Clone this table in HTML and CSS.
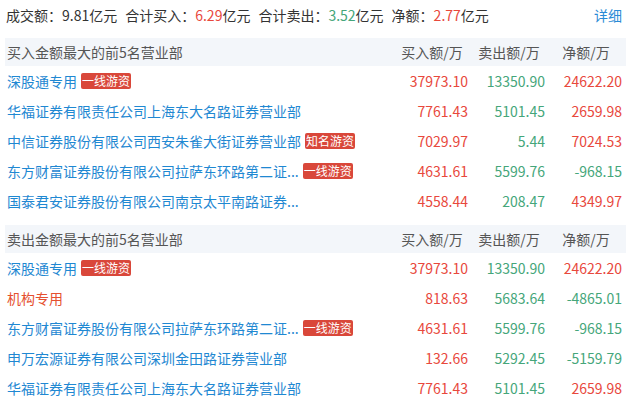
FILE: index.html
```html
<!DOCTYPE html>
<html lang="zh-CN">
<head>
<meta charset="utf-8">
<title>龙虎榜</title>
<link rel="stylesheet" href="styles.css">
</head>
<body>
<div class="page">
  <div class="summary">
    <div class="stats">
      <span class="stat">成交额：<span class="v">9.81</span>亿元</span>
      <span class="stat">合计买入：<span class="v up">6.29</span>亿元</span>
      <span class="stat">合计卖出：<span class="v down">3.52</span>亿元</span>
      <span class="stat">净额：<span class="v up">2.77</span>亿元</span>
    </div>
    <a class="more">详细</a>
  </div>

  <div class="section">
    <div class="head">
      <div class="name">买入金额最大的前5名营业部</div>
      <div class="col">买入额/万</div>
      <div class="col">卖出额/万</div>
      <div class="col">净额/万</div>
    </div>
    <div class="row">
      <div class="name"><span class="link">深股通专用</span><span class="tag">一线游资</span></div>
      <div class="num up">37973.10</div><div class="num down">13350.90</div><div class="num up">24622.20</div>
    </div>
    <div class="row">
      <div class="name"><span class="link">华福证券有限责任公司上海东大名路证券营业部</span></div>
      <div class="num up">7761.43</div><div class="num down">5101.45</div><div class="num up">2659.98</div>
    </div>
    <div class="row">
      <div class="name"><span class="link">中信证券股份有限公司西安朱雀大街证券营业部</span><span class="tag">知名游资</span></div>
      <div class="num up">7029.97</div><div class="num down">5.44</div><div class="num up">7024.53</div>
    </div>
    <div class="row">
      <div class="name"><span class="link">东方财富证券股份有限公司拉萨东环路第二证...</span><span class="tag">一线游资</span></div>
      <div class="num up">4631.61</div><div class="num down">5599.76</div><div class="num down">-968.15</div>
    </div>
    <div class="row">
      <div class="name"><span class="link">国泰君安证券股份有限公司南京太平南路证券...</span></div>
      <div class="num up">4558.44</div><div class="num down">208.47</div><div class="num up">4349.97</div>
    </div>
  </div>

  <div class="section second">
    <div class="head">
      <div class="name">卖出金额最大的前5名营业部</div>
      <div class="col">买入额/万</div>
      <div class="col">卖出额/万</div>
      <div class="col">净额/万</div>
    </div>
    <div class="row">
      <div class="name"><span class="link">深股通专用</span><span class="tag">一线游资</span></div>
      <div class="num up">37973.10</div><div class="num down">13350.90</div><div class="num up">24622.20</div>
    </div>
    <div class="row">
      <div class="name"><span class="inst">机构专用</span></div>
      <div class="num up">818.63</div><div class="num down">5683.64</div><div class="num down">-4865.01</div>
    </div>
    <div class="row">
      <div class="name"><span class="link">东方财富证券股份有限公司拉萨东环路第二证...</span><span class="tag">一线游资</span></div>
      <div class="num up">4631.61</div><div class="num down">5599.76</div><div class="num down">-968.15</div>
    </div>
    <div class="row">
      <div class="name"><span class="link">申万宏源证券有限公司深圳金田路证券营业部</span></div>
      <div class="num up">132.66</div><div class="num down">5292.45</div><div class="num down">-5159.79</div>
    </div>
    <div class="row">
      <div class="name"><span class="link">华福证券有限责任公司上海东大名路证券营业部</span></div>
      <div class="num up">7761.43</div><div class="num down">5101.45</div><div class="num up">2659.98</div>
    </div>
  </div>
</div>
</body>
</html>
```

FILE: styles.css
```css
* { box-sizing: border-box; }
html, body { margin: 0; padding: 0; background: #fff; }
body {
  font-family: "Noto Sans CJK SC", "Microsoft YaHei", sans-serif;
  font-size: 14px;
  color: #333;
  width: 626px;
  overflow: hidden;
}
.page { padding: 0 4px 0 5px; }

.summary {
  height: 30px;
  margin-bottom: 8px;
  display: flex;
  align-items: center;
  justify-content: space-between;
  padding-left: 1px;
}
.stats { display: flex; gap: 8px; }
.stat { white-space: nowrap; }
.v { color: #333; }
.more { color: #2a8bd6; cursor: pointer; }

.up { color: #e8483c; }
.down { color: #45a67a; }

.section.second { margin-top: 9px; }

.head {
  display: flex;
  align-items: center;
  height: 28px;
  background: #f3f6fa;
  color: #555;
  margin-right: -4px;
  padding-right: 4px;
}
.head .name { padding-left: 2px; }
.head .col { width: 77px; text-align: center; padding-left: 5px; white-space: nowrap; }

.row {
  display: flex;
  align-items: center;
  height: 30px;
}
.name {
  flex: 1;
  min-width: 0;
  padding-left: 2px;
  display: flex;
  align-items: center;
  white-space: nowrap;
}
.link { color: #1f88d2; }
.inst { color: #e5502f; }
.tag {
  margin-left: 4px;
  background: #d9473a;
  color: #fff;
  font-size: 12px;
  line-height: 16px;
  height: 16px;
  padding: 0 1px;
  border-radius: 2px;
}
.num { width: 77px; text-align: right; white-space: nowrap; }
```
